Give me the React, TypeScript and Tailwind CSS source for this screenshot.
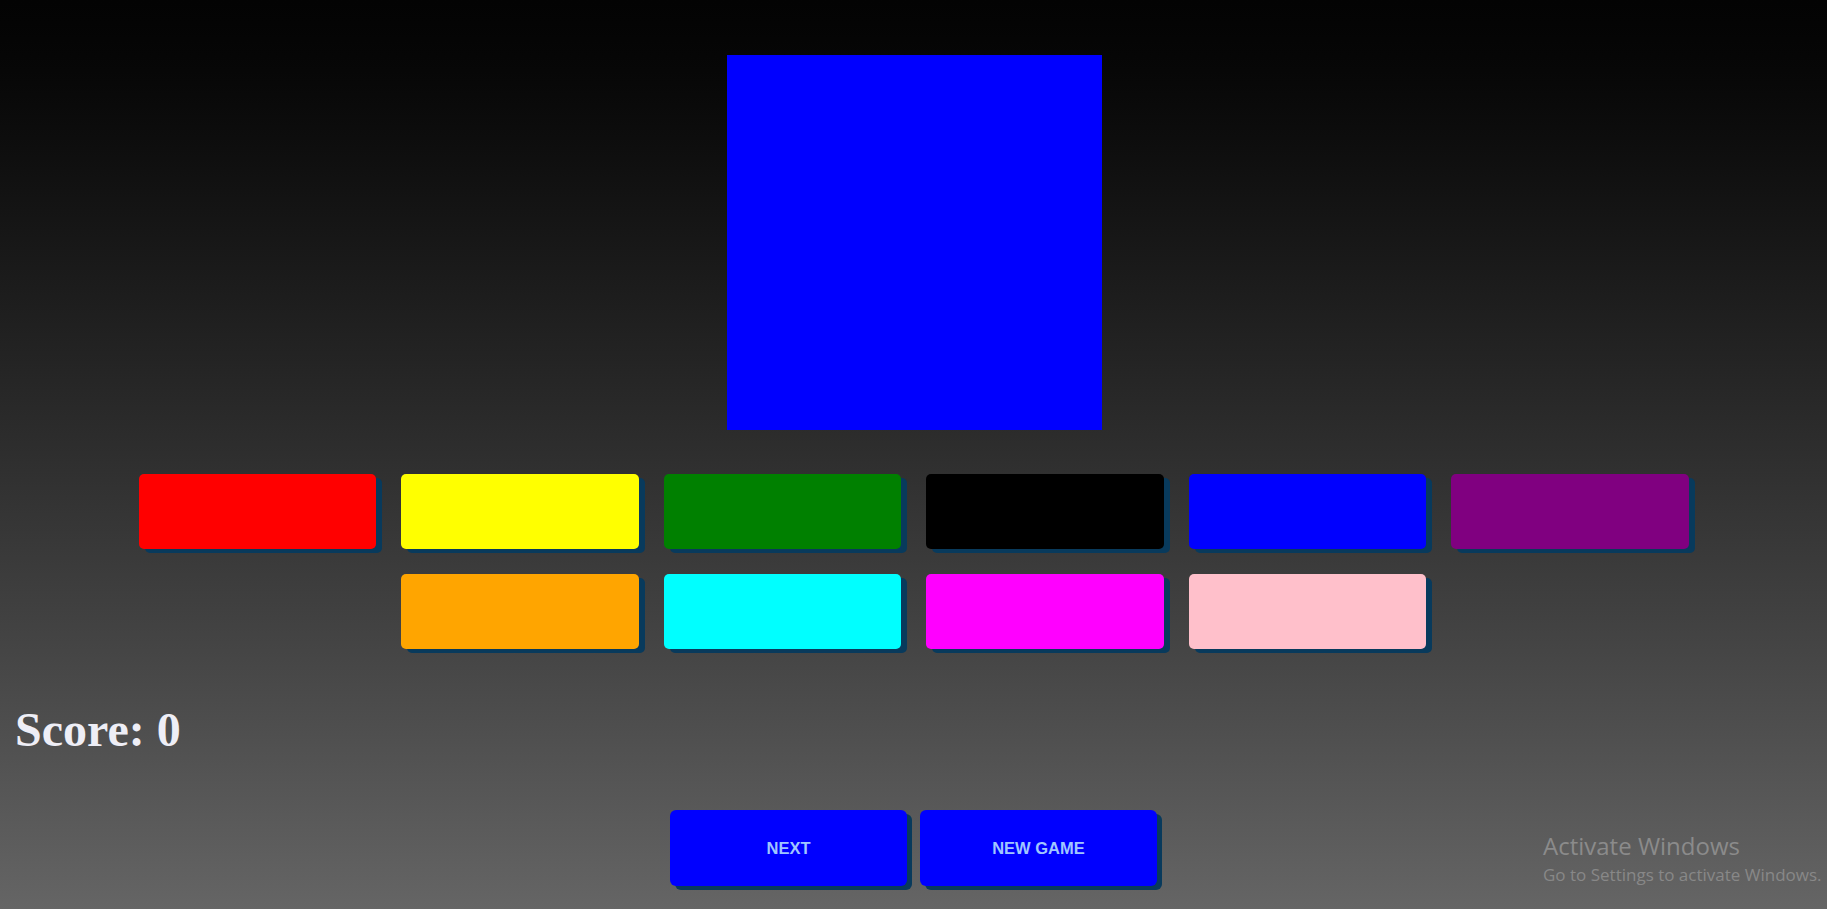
const colors = ["red", "yellow", "green", "black", "blue", "purple", "orange", "cyan", "magenta", "pink"]

export default function App() {
  return (
    <div className="relative h-[909px] w-full overflow-hidden bg-gradient-to-b from-[#030303] to-[#656565]">
      {/* Target colour */}
      <div className="pt-[55px] pl-[1px] flex justify-center">
        <div className="w-[375px] h-[375px] bg-[#0000ff]" />
      </div>

      {/* Colour choices */}
      <div className="mt-[44px] mx-auto w-[1550px] flex flex-wrap justify-center gap-[25px]">
        {colors.map((c) => (
          <button
            key={c}
            className="w-[237.5px] h-[75px] rounded-[5px] shadow-[6px_4px_0_#083a5c]"
            style={{ backgroundColor: c }}
          />
        ))}
      </div>

      {/* Score */}
      <h1
        className="mt-[53px] pl-[15px] text-[48px] leading-[55px] font-bold text-[#eeeef6]"
        style={{ fontFamily: '"Liberation Serif", "Times New Roman", serif' }}
      >
        Score: 0
      </h1>

      {/* Controls */}
      <div className="mt-[53px] flex justify-center gap-[13px]">
        {["NEXT", "NEW GAME"].map((label) => (
          <button
            key={label}
            className="w-[237px] h-[76px] rounded-[6px] bg-[#0000ff] text-[16.5px] font-bold text-[#a0c6ff] shadow-[5px_4px_0_#083a5c]"
            style={{ fontFamily: '"Liberation Sans", Arial, sans-serif' }}
          >
            {label}
          </button>
        ))}
      </div>

      {/* Windows watermark */}
      <div
        className="absolute left-[1543px] top-[831px] text-[#8b8b8b]"
        style={{ fontFamily: '"Open Sans", "Noto Sans", sans-serif' }}
      >
        <div className="text-[24px] leading-[30px]">Activate Windows</div>
        <div className="text-[17px] leading-[28px] text-[#888888] whitespace-nowrap">
          Go to Settings to activate Windows.
        </div>
      </div>
    </div>
  )
}
